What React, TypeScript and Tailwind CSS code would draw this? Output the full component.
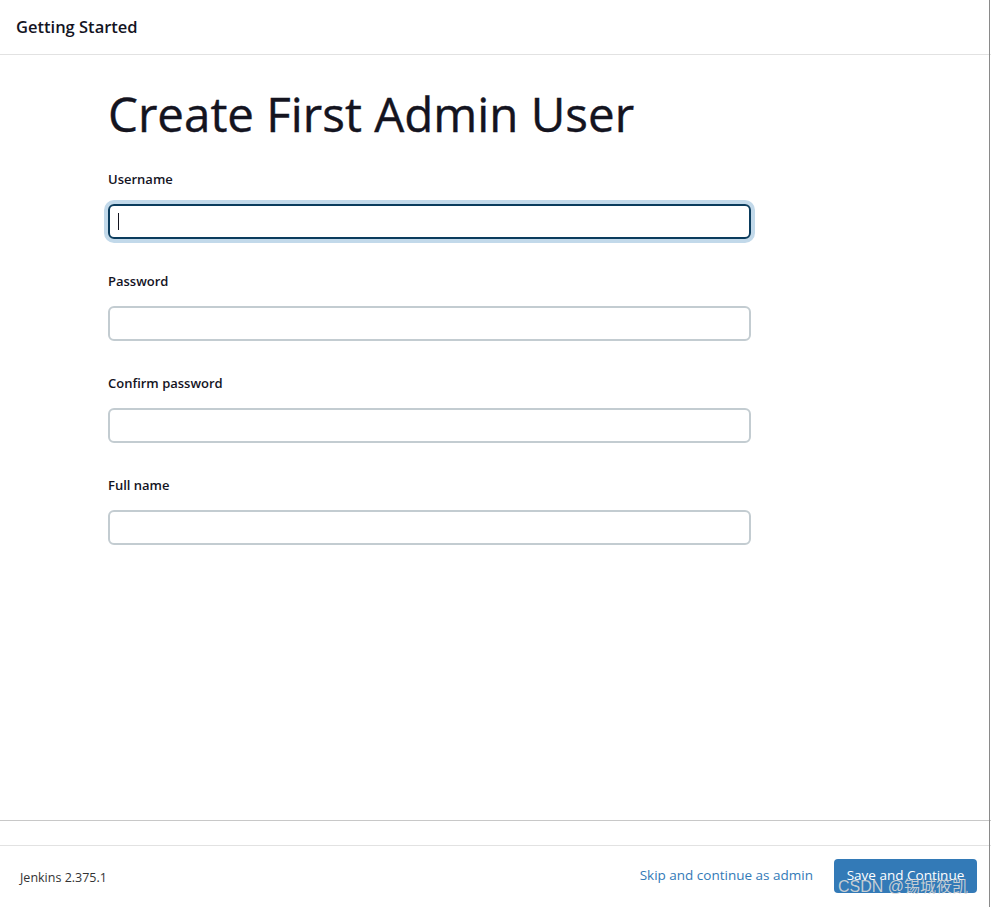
import React from "react";

const Field = ({ label, focused }: { label: string; focused?: boolean }) => (
  <div className="flex flex-col">
    <label className="text-[13px] font-semibold text-[#14141f] leading-[20px] h-[20px]">{label}</label>
    <div className="mt-[15px]">
      {focused ? (
        <div className="w-[643px] h-[35px] rounded-[6px] border-2 border-[#0b3c5d] shadow-[0_0_0_4px_#c2d9ea] flex items-center pl-[8px]">
          <span className="w-px h-[17px] bg-[#14141f]" />
        </div>
      ) : (
        <div className="w-[643px] h-[35px] rounded-[6px] border-2 border-[#c3ccd1]" />
      )}
    </div>
  </div>
);

export default function App() {
  return (
    <div
      className="relative w-[991px] h-[907px] bg-white flex flex-col overflow-hidden"
      style={{ fontFamily: '"Open Sans", "Noto Sans CJK SC", sans-serif' }}
    >
      <div className="absolute top-0 right-[1px] bottom-0 w-px bg-[#8a8a8a]" />
      <header className="h-[55px] border-b border-[#e2e2e2] flex items-center pl-[16px] shrink-0">
        <span className="text-[16.5px] font-semibold text-[#14141f]">Getting Started</span>
      </header>
      <main className="flex-1 pl-[108px] pt-[26px]">
        <h1 className="text-[47.5px] leading-[66px] text-[#14141f] font-normal [-webkit-text-stroke:0.4px_#14141f]">Create First Admin User</h1>
        <div className="mt-[22px] flex flex-col gap-[32px]">
          <Field label="Username" focused />
          <Field label="Password" />
          <Field label="Confirm password" />
          <Field label="Full name" />
        </div>
      </main>
      <div className="h-[25px] border-t border-[#c8c8c8] shrink-0" />
      <footer className="h-[62px] border-t border-[#e2e2e2] flex items-center justify-between pl-[20px] pr-[14px] shrink-0">
        <span className="text-[12.5px] text-[#333] mt-[3px]">Jenkins 2.375.1</span>
        <div className="flex items-center gap-[21px]">
          <span className="text-[13.5px] text-[#337ab7] -mt-[2px]">Skip and continue as admin</span>
          <button className="h-[34px] w-[143px] rounded-[4px] bg-[#337ab7] text-white text-[13.5px] -mt-[2px]">Save and Continue</button>
        </div>
      </footer>
      <div className="absolute left-[838px] top-[877px] text-[16px] leading-[20px] text-[#d8d8d8]/90 pointer-events-none" style={{ fontFamily: '"Liberation Sans", "Noto Sans CJK SC", sans-serif' }}>
        CSDN @锡城筱凯
      </div>
    </div>
  );
}
